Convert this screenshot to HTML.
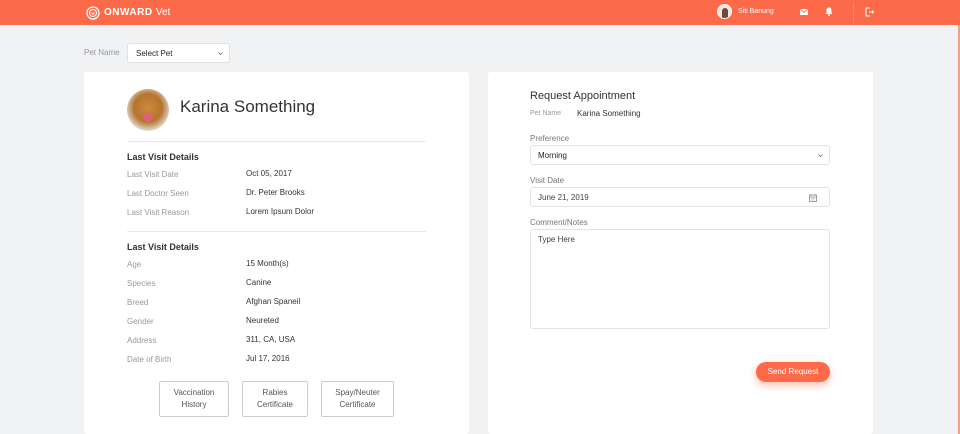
<!DOCTYPE html>
<html><head><meta charset="utf-8"><style>
*{margin:0;padding:0;box-sizing:border-box}
html,body{width:960px;height:434px;overflow:hidden}
body{background:#f1f2f4;font-family:"Liberation Sans",sans-serif;position:relative;color:#333}
.a{position:absolute;white-space:nowrap}
.hdr{position:absolute;left:0;top:0;width:960px;height:25px;background:#fd6a4a}
.card{position:absolute;background:#fff;top:72px;height:362px;border-radius:3px}
.lbl{font-size:8px;color:#999}
.val{font-size:8px;color:#333}
.h{font-size:9px;font-weight:bold;color:#333}
.line{position:absolute;height:1px;background:#e8e8e8}
.box{position:absolute;border:1px solid #e2e2e2;border-radius:3px;background:#fff}
.btn{position:absolute;border:1px solid #ccc;border-radius:2px;font-size:8px;color:#555;text-align:center;line-height:12px;padding-top:5px}
</style></head><body>
<div class="hdr"></div>
<svg class="a" style="left:86px;top:6px" width="14" height="14" viewBox="0 0 14 14"><circle cx="7" cy="7" r="6" fill="none" stroke="#fff" stroke-width="1.3"/><circle cx="7" cy="7" r="3.5" fill="none" stroke="#fff" stroke-width="1.1"/><path d="M5.6 6.5 7 8.5 8.4 6.5" fill="none" stroke="#fff" stroke-width="1"/></svg>
<div class="a" style="left:104px;top:7px;font-size:10px;color:#fff;font-weight:bold;letter-spacing:.5px">ONWARD <span style="font-weight:normal;letter-spacing:0">Vet</span></div>
<div class="a" style="left:717px;top:4px;width:15px;height:15px;border-radius:50%;background:#f3e6dd;border:1px solid #fff;overflow:hidden"><div style="margin:3px 0 0 4px;width:6px;height:10px;border-radius:3px 3px 1px 1px;background:#6b4a3a"></div></div>
<div class="a" style="left:738px;top:8px;font-size:7px;color:#fff">Siti Banung</div>
<svg class="a" style="left:800px;top:9px" width="8" height="6" viewBox="0 0 8 6"><rect width="8" height="6" fill="#fff"/><path d="M0 0 4 3.3 8 0" fill="none" stroke="#fd6a4a" stroke-width=".8"/></svg>
<svg class="a" style="left:825px;top:7px" width="8" height="9" viewBox="0 0 8 9"><path d="M4 0.5C2 .5 1.5 2 1.5 4V6L.5 7H7.5L6.5 6V4C6.5 2 6 .5 4 .5Z" fill="#fff"/><circle cx="4" cy="8" r="1" fill="#fff"/></svg>
<div class="a" style="left:853px;top:2px;width:1px;height:21px;background:#f38a70"></div>
<svg class="a" style="left:865px;top:7px" width="9" height="10" viewBox="0 0 9 10"><path d="M5 1H1V9H5M4 5H8.5M7 3.5 8.5 5 7 6.5" fill="none" stroke="#fff" stroke-width="1"/></svg>
<div class="a" style="left:958px;top:25px;width:2px;height:409px;background:#f0a08c"></div>

<div class="a lbl" style="left:84px;top:48px;font-size:8px">Pet Name</div>
<div class="box" style="left:127px;top:43px;width:103px;height:20px"><span class="a" style="left:8px;top:5px;font-size:8px;color:#222">Select Pet</span><svg class="a" style="left:90px;top:8px" width="5" height="3" viewBox="0 0 5 3"><path d="M.5.5 2.5 2.5 4.5.5" fill="none" stroke="#666" stroke-width=".8"/></svg></div>

<div class="card" style="left:84px;width:385px"></div>
<div class="a" style="left:127px;top:89px;width:42px;height:42px;border-radius:50%;background:radial-gradient(circle at 50% 45%,#c98a3e 0,#b4732f 45%,#e8e0d6 75%)"><div style="position:absolute;left:17px;top:24px;width:8px;height:9px;border-radius:0 0 4px 4px;background:#e0607a"></div></div>
<div class="a" style="left:180px;top:97px;font-size:17px;color:#333">Karina Something</div>
<div class="line" style="left:127px;top:141px;width:299px"></div>
<div class="a h" style="left:127px;top:152px">Last Visit Details</div>
<div class="a lbl" style="left:127px;top:170px">Last Visit Date</div><div class="a val" style="left:246px;top:169px">Oct 05, 2017</div>
<div class="a lbl" style="left:127px;top:189px">Last Doctor Seen</div><div class="a val" style="left:246px;top:188px">Dr. Peter Brooks</div>
<div class="a lbl" style="left:127px;top:208px">Last Visit Reason</div><div class="a val" style="left:246px;top:207px">Lorem Ipsum Dolor</div>
<div class="line" style="left:127px;top:231px;width:299px"></div>
<div class="a h" style="left:127px;top:242px">Last Visit Details</div>
<div class="a lbl" style="left:127px;top:260px">Age</div><div class="a val" style="left:246px;top:259px">15 Month(s)</div>
<div class="a lbl" style="left:127px;top:279px">Species</div><div class="a val" style="left:246px;top:278px">Canine</div>
<div class="a lbl" style="left:127px;top:298px">Breed</div><div class="a val" style="left:246px;top:297px">Afghan Spaneil</div>
<div class="a lbl" style="left:127px;top:317px">Gender</div><div class="a val" style="left:246px;top:316px">Neureted</div>
<div class="a lbl" style="left:127px;top:336px">Address</div><div class="a val" style="left:246px;top:335px">311, CA, USA</div>
<div class="a lbl" style="left:127px;top:355px">Date of Birth</div><div class="a val" style="left:246px;top:354px">Jul 17, 2016</div>
<div class="btn" style="left:159px;top:381px;width:70px;height:36px">Vaccination<br>History</div>
<div class="btn" style="left:242px;top:381px;width:66px;height:36px">Rabies<br>Certificate</div>
<div class="btn" style="left:321px;top:381px;width:73px;height:36px">Spay/Neuter<br>Certificate</div>

<div class="card" style="left:488px;width:385px"></div>
<div class="a" style="left:530px;top:90px;font-size:11px;color:#333">Request Appointment</div>
<div class="a lbl" style="left:530px;top:110px;font-size:7px">Pet Name</div><div class="a val" style="left:577px;top:109px">Karina Something</div>
<div class="a lbl" style="left:530px;top:134px;color:#777">Preference</div>
<div class="box" style="left:530px;top:145px;width:300px;height:20px"><span class="a" style="left:7px;top:5px;font-size:8px;color:#222">Morning</span><svg class="a" style="left:287px;top:8px" width="5" height="3" viewBox="0 0 5 3"><path d="M.5.5 2.5 2.5 4.5.5" fill="none" stroke="#666" stroke-width=".8"/></svg></div>
<div class="a lbl" style="left:530px;top:176px;color:#777">Visit Date</div>
<div class="box" style="left:530px;top:187px;width:300px;height:20px"><span class="a" style="left:7px;top:5px;font-size:8px;color:#444">June 21, 2019</span>
<svg class="a" style="left:278px;top:6px" width="8" height="8" viewBox="0 0 8 8"><rect x=".5" y="1" width="7" height="6.5" fill="none" stroke="#888" stroke-width=".8"/><path d="M.5 3H7.5M2.5 4.5H3.5M4.5 4.5H5.5M2.5 6H3.5M4.5 6H5.5M2 0V1.5M6 0V1.5" stroke="#888" stroke-width=".7"/></svg></div>
<div class="a lbl" style="left:530px;top:218px;color:#777">Comment/Notes</div>
<div class="box" style="left:530px;top:229px;width:300px;height:100px"><span class="a" style="left:7px;top:5px;font-size:8px;color:#444">Type Here</span></div>
<div class="a" style="left:756px;top:362px;width:74px;height:20px;border-radius:10px;background:#fd6a4a;box-shadow:0 3px 8px rgba(253,106,74,.45);color:#fff;font-size:8px;text-align:center;line-height:20px">Send Request</div>
</body></html>
